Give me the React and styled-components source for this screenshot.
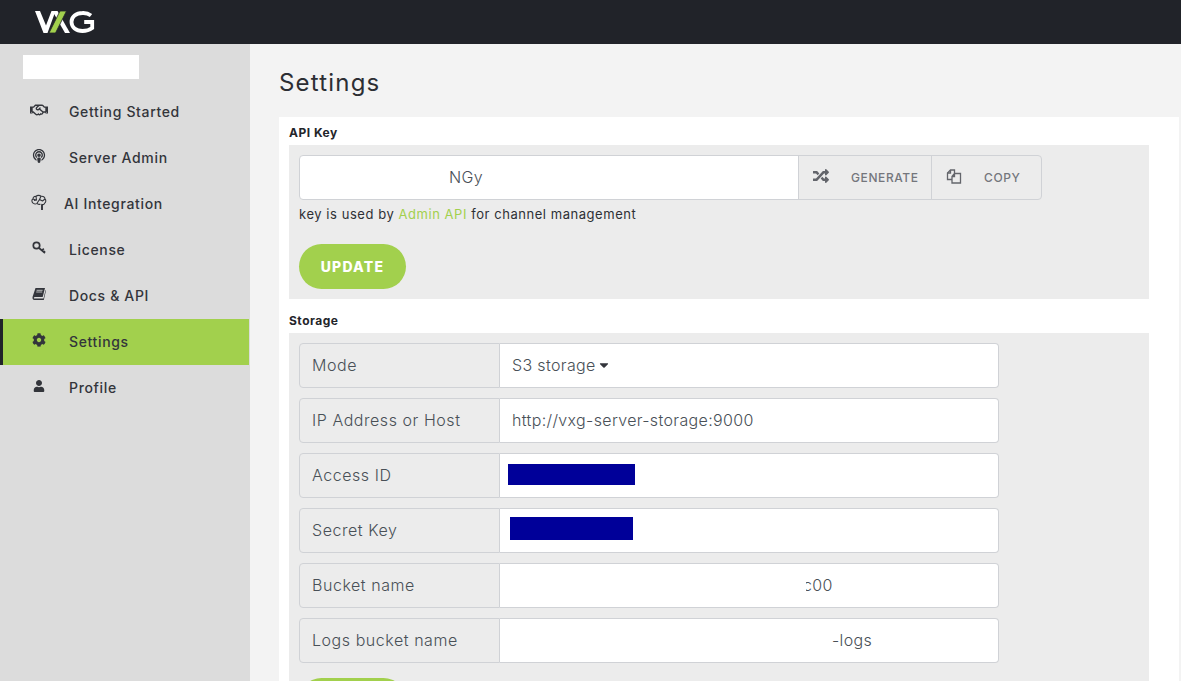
import React from "react";
import styled, { createGlobalStyle } from "styled-components";
import {
  FaRegHandshake,
  FaPodcast,
  FaCog,
  FaUser,
  FaRandom,
  FaCaretDown,
} from "react-icons/fa";

const GlobalStyle = createGlobalStyle`
  html, body {
    margin: 0;
    height: 100%;
    overflow: hidden;
    background: #f3f3f3;
    font-family: Inter, "Noto Sans", sans-serif;
  }
  * { box-sizing: border-box; }
`;

const Page = styled.div`
  display: flex;
  flex-direction: column;
  height: 681px;
  overflow: hidden;
`;
const TopBar = styled.header`
  flex: 0 0 44px;
  background: #212329;
  padding: 11px 0 0 35px;
`;
const Body = styled.div`
  display: flex;
  flex: 1;
  min-height: 0;
`;
const Sidebar = styled.nav`
  flex: 0 0 250px;
  background: #dcdcdc;
  padding: 11px 1px 0 0;
`;
const UserBox = styled.div`
  width: 116px;
  height: 24px;
  margin: 0 0 10px 23px;
  background: #fff;
`;
const NavItem = styled.a`
  display: flex;
  align-items: center;
  height: 46px;
  padding: 0 0 2px ${(p) => (p.$active ? "27px" : "30px")};
  color: #33353b;
  font-size: 14px;
  font-weight: 500;
  letter-spacing: 0.65px;
  background: ${(p) => (p.$active ? "#a2d04d" : "transparent")};
  border-left: ${(p) => (p.$active ? "3px solid #212329" : "none")};
`;
const NavIcon = styled.span`
  display: flex;
  justify-content: center;
  width: 18px;
  margin: -2px ${(p) => p.$gap || 21}px 0 0;
  font-size: 14px;
`;
const Main = styled.main`
  flex: 1;
  min-width: 0;
  padding: 0 2px 0 29px;
`;
const Title = styled.h1`
  margin: 0;
  height: 73px;
  padding-top: 24px;
  font-size: 24px;
  line-height: 29px;
  font-weight: 400;
  letter-spacing: 1.2px;
  color: #2c2e33;
`;
const Card = styled.section`
  background: #fff;
  padding: 8px 30px 0 10px;
`;
const SectionLabel = styled.div`
  height: 20px;
  font-size: 12px;
  line-height: 15px;
  font-weight: 700;
  letter-spacing: 0.5px;
  color: #23252a;
`;
const Panel = styled.div`
  background: #ececec;
  padding: 10px;
  margin-bottom: ${(p) => p.$mb || 0}px;
`;
const KeyRow = styled.div`
  display: flex;
  height: 45px;
  width: 743px;
`;
const KeyInput = styled.div`
  width: 500px;
  padding-left: 149px;
  background: #fff;
  border: 1px solid #d0d2d6;
  border-radius: 4px 0 0 4px;
  color: #495057;
  font-size: 16px;
  line-height: 43px;
  font-weight: 300;
  letter-spacing: 0.4px;
`;
const AddonButton = styled.div`
  display: flex;
  align-items: center;
  width: ${(p) => p.$width}px;
  padding-left: 14px;
  margin-left: -1px;
  border: 1px solid #d0d2d6;
  border-radius: ${(p) => (p.$last ? "0 4px 4px 0" : "0")};
  color: #74767c;
  font-size: 12px;
  font-weight: 500;
  letter-spacing: 0.6px;
`;
const AddonIcon = styled.span`
  display: flex;
  width: 38px;
  margin-top: -3px;
  font-size: 16px;
  color: #63656b;
`;
const Hint = styled.p`
  margin: 6px 0 0;
  font-size: 13px;
  line-height: 16px;
  letter-spacing: 0.55px;
  color: #2e3035;
`;
const HintLink = styled.span`
  color: #a2d04d;
`;
const UpdateButton = styled.button`
  display: block;
  width: 107px;
  height: 45px;
  margin-top: ${(p) => p.$mt}px;
  padding-bottom: 2px;
  border: none;
  border-radius: 23px;
  background: #a2d04d;
  color: #fff;
  font-family: inherit;
  font-size: 14px;
  font-weight: 800;
  letter-spacing: 1.2px;
`;
const Field = styled.div`
  display: flex;
  width: 700px;
  height: 45px;
  margin-bottom: 10px;
`;
const FieldLabel = styled.div`
  width: 201px;
  padding-left: 12px;
  background: #ececec;
  border: 1px solid #d0d2d6;
  border-radius: 4px 0 0 4px;
  color: #495057;
  font-size: 16px;
  line-height: 43px;
  font-weight: 300;
  letter-spacing: 0.55px;
`;
const FieldValue = styled.div`
  flex: 1;
  display: flex;
  align-items: center;
  padding: 0 0 2px ${(p) => p.$indent || 12}px;
  background: #fff;
  border: 1px solid #d0d2d6;
  border-left: none;
  border-radius: 0 4px 4px 0;
  color: #495057;
  font-size: 16px;
  font-weight: 300;
  letter-spacing: 0.35px;
`;
const Redaction = styled.div`
  width: ${(p) => p.$width}px;
  height: ${(p) => p.$height}px;
  margin-top: ${(p) => p.$up * -2}px;
  background: #000099;
`;
const ClippedText = styled.span`
  position: relative;
  &::before {
    content: "";
    position: absolute;
    left: -2px;
    top: 0;
    bottom: 0;
    width: 5px;
    background: #fff;
  }
`;
const Caret = styled(FaCaretDown)`
  margin-left: 1px;
  color: #33353b;
`;

function Logo() {
  return (
    <svg width="60" height="22" viewBox="0 0 60 22" style={{ display: "block" }}>
      <path d="M0 0h5l6 14.5L16.5 0h4l-8 22h-4z" fill="#fff" />
      <path d="M17.5 0h5L35 22h-5z" fill="#fff" />
      <path d="M25 0h6.500L20.500 22H14z" fill="#a2d04d" stroke="#212329" strokeWidth="0.8" />
      <path
        d="M56 4.500A11.500 9.500 0 0 0 47.500 2C41 2 36.500 5.800 36.500 11S41 20 47.500 20c3.700 0 7-1 9.700-3v-6h-8"
        fill="none"
        stroke="#fff"
        strokeWidth="3.800"
      />
    </svg>
  );
}

function BrainIcon() {
  return (
    <svg width="16" height="17" viewBox="0 0 16 17" fill="none" stroke="currentColor" strokeWidth="1.100">
      <path d="M2 9C.5 8 .5 5.500 2 5c-.2-1.800 1.500-3 3-2.500C6 1 9 1 10 2.300c2-.5 4 .8 4 2.700 1.300 1 1 3.700-.5 4.300-.3 1-1.500 1.500-2.500 1.200V16" />
      <path d="M2 9c1 1.200 3 1.200 4 .3 1 1 2.500 1.200 3.500 1M5 2.500 5.500 6 3 6.500M10 2.300 8.500 5.500l3 1.500M6 9.300 8.500 5.500M2 5l3 1M14 5l-2.500 2" />
      <path d="M11 10.500V16" strokeWidth="1.800" />
    </svg>
  );
}

function KeyIcon() {
  return (
    <svg width="14" height="14" viewBox="0 0 14 14" fill="none" stroke="currentColor" strokeWidth="1.700">
      <circle cx="4.500" cy="4.500" r="3.200" />
      <path d="M7 7l6 5M10 9.500l1.800-1.800M12 11l1-1" />
    </svg>
  );
}

function BookIcon() {
  return (
    <svg width="14" height="14" viewBox="0 0 14 14">
      <path d="M3.500 1H13l-2.300 9H2.800C2 10 1.600 10.800 2 11.400h9.500L13.600 3l.4.6-2.200 9.400H2.500C.8 13 .2 11.300.6 9.800z" fill="currentColor" />
      <path d="M4.600 3.300h6M4.200 5h6" stroke="#dcdcdc" strokeWidth="0.800" />
    </svg>
  );
}

function CopyIcon() {
  return (
    <svg width="16" height="16" viewBox="0 0 16 16" fill="none" stroke="currentColor" strokeWidth="1.300">
      <path d="M6 11.500H1.500V5L4.500 2h4v3" />
      <path d="M6 8.500 8.500 5.500h6v9.500H6zM4.500 2v3h-3M8.500 5.500v3H6" />
    </svg>
  );
}

const navItems = [
  { label: "Getting Started", icon: <FaRegHandshake size={18} /> },
  { label: "Server Admin", icon: <FaPodcast /> },
  { label: "AI Integration", icon: <BrainIcon />, gap: 16 },
  { label: "License", icon: <KeyIcon /> },
  { label: "Docs & API", icon: <BookIcon /> },
  { label: "Settings", icon: <FaCog />, active: true },
  { label: "Profile", icon: <FaUser size={12} /> },
];

export default function App() {
  return (
    <Page>
      <GlobalStyle />
      <TopBar>
        <Logo />
      </TopBar>
      <Body>
        <Sidebar>
          <UserBox />
          {navItems.map((n) => (
            <NavItem key={n.label} $active={n.active}>
              <NavIcon $gap={n.gap}>{n.icon}</NavIcon>
              {n.label}
            </NavItem>
          ))}
        </Sidebar>
        <Main>
          <Title>Settings</Title>
          <Card>
            <SectionLabel>API Key</SectionLabel>
            <Panel $mb={14}>
              <KeyRow>
                <KeyInput>NGy</KeyInput>
                <AddonButton $width={134}>
                  <AddonIcon>
                    <FaRandom />
                  </AddonIcon>
                  GENERATE
                </AddonButton>
                <AddonButton $width={111} $last>
                  <AddonIcon>
                    <CopyIcon />
                  </AddonIcon>
                  COPY
                </AddonButton>
              </KeyRow>
              <Hint>
                key is used by <HintLink>Admin API</HintLink> for channel management
              </Hint>
              <UpdateButton $mt={22}>UPDATE</UpdateButton>
            </Panel>
            <SectionLabel>Storage</SectionLabel>
            <Panel>
              <Field>
                <FieldLabel>Mode</FieldLabel>
                <FieldValue>
                  S3 storage
                  <Caret size={14} />
                </FieldValue>
              </Field>
              <Field>
                <FieldLabel>IP Address or Host</FieldLabel>
                <FieldValue>http://vxg-server-storage:9000</FieldValue>
              </Field>
              <Field>
                <FieldLabel>Access ID</FieldLabel>
                <FieldValue $indent={8}>
                  <Redaction $width={127} $height={21} $up={0} />
                </FieldValue>
              </Field>
              <Field>
                <FieldLabel>Secret Key</FieldLabel>
                <FieldValue $indent={10}>
                  <Redaction $width={123} $height={23} $up={1} />
                </FieldValue>
              </Field>
              <Field>
                <FieldLabel>Bucket name</FieldLabel>
                <FieldValue $indent={303}>
                  <ClippedText>c00</ClippedText>
                </FieldValue>
              </Field>
              <Field>
                <FieldLabel>Logs bucket name</FieldLabel>
                <FieldValue $indent={332}>-logs</FieldValue>
              </Field>
              <UpdateButton $mt={15}>UPDATE</UpdateButton>
            </Panel>
          </Card>
        </Main>
      </Body>
    </Page>
  );
}
